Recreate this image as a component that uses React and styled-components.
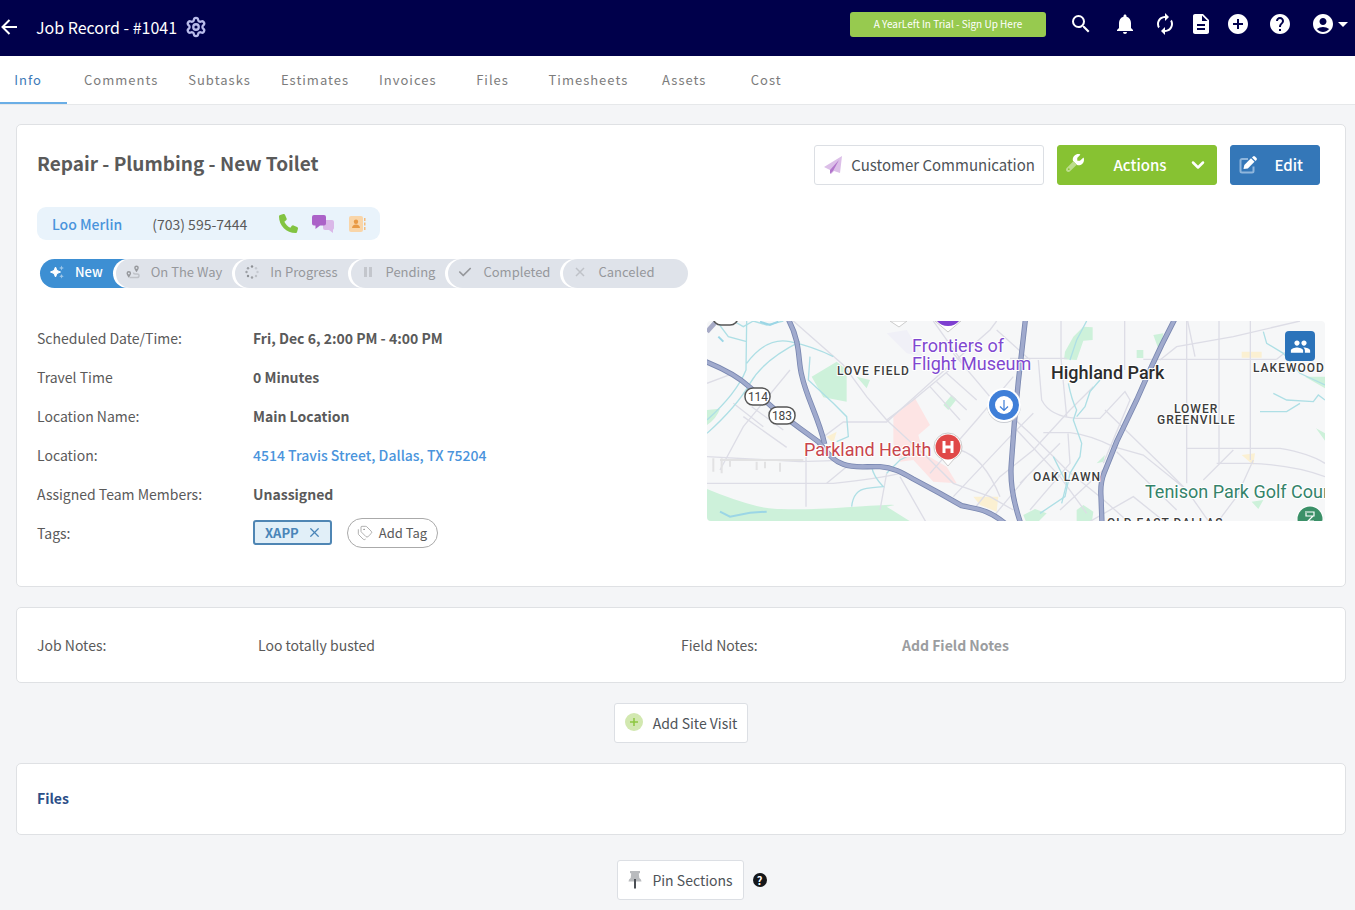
import React, { useState } from 'react'
import styled, { createGlobalStyle } from 'styled-components'
import {
	MdAccountCircle,
	MdAddCircle,
	MdArrowDropDown,
	MdAutorenew,
	MdDescription,
	MdGroup,
	MdHelp,
	MdNotifications,
	MdSearch,
} from 'react-icons/md'
import { FaCheck, FaPhone, FaWrench } from 'react-icons/fa6'
import { ChevronDown, Settings, Tags, X } from 'lucide-react'

const GlobalStyle = createGlobalStyle`
	*,
	*::before,
	*::after {
		box-sizing: border-box;
	}

	body {
		margin: 0;
		background-color: #f4f5f7;
		color: #5a5a5a;
		font-family: 'Noto Sans CJK SC', 'Open Sans', sans-serif;
		font-size: 14px;
		line-height: 20px;
	}

	button {
		font-family: inherit;
		cursor: pointer;
	}

	svg {
		display: block;
		flex-shrink: 0;
	}
`

const Header = styled.header`
	display: flex;
	justify-content: space-between;
	height: 56px;
	background-color: #00004b;
	color: #fff;
`

const HeaderTitle = styled.div`
	display: flex;
	align-items: center;
	padding: 0 0 2px 1px;
`

const Title = styled.h1`
	margin: 0 8px 0 19px;
	font-size: 16px;
	font-weight: 400;
	line-height: 24px;
`

const PlainButton = styled.button`
	display: flex;
	align-items: center;
	justify-content: center;
	padding: 0;
	border: 0;
	background: none;
	color: ${({ $color }) => $color || 'inherit'};
`

const HeaderTools = styled.div`
	display: flex;
	align-items: center;
	height: 48px;
`

const TrialButton = styled.button`
	width: 196px;
	height: 25px;
	margin-right: 13px;
	padding: 0;
	border: 0;
	border-radius: 3px;
	background-color: #97ca4f;
	color: #fff;
	font-size: 10px;
	line-height: 24px;
`

const ToolButton = styled(PlainButton)`
	width: ${({ $width }) => $width || 36}px;
	height: 48px;
`

const AccountButton = styled(PlainButton)`
	padding-left: 8px;

	svg + svg {
		margin-left: -4px;
	}
`

const TabBar = styled.nav`
	display: flex;
	height: 49px;
	background-color: #fff;
	border-bottom: 1px solid #e6e8ea;
`

const Tab = styled.a`
	display: flex;
	align-items: center;
	justify-content: center;
	min-width: 82px;
	height: 48px;
	padding: 0 15px;
	color: #7c7c7c;
	font-size: 13px;
	letter-spacing: 1px;
	text-decoration: none;

	&:first-child {
		min-width: 67px;
		margin-right: 2px;
		padding: 0 25px 0 14px;
	}

	&[aria-current] {
		color: #3d7ab8;
		border-bottom: 2px solid #6aaee6;
		padding-top: 2px;
	}
`

const Main = styled.main`
	display: flex;
	flex-direction: column;
	align-items: center;
	gap: 20px;
	padding: 19px 9px 10px 16px;
`

const Card = styled.section`
	width: 100%;
	padding: ${({ $pad }) => $pad || '20px'};
	border: 1px solid #dfe1e4;
	border-radius: 5px;
	background-color: #fff;
`

const CardHeader = styled.div`
	display: flex;
	align-items: flex-start;
	justify-content: space-between;
	padding-right: 5px;
`

const JobTitle = styled.h2`
	margin: 3px 0 0;
	font-size: 19px;
	font-weight: 700;
	line-height: 30px;
`

const ButtonGroup = styled.div`
	display: flex;
	gap: 13px;
`

const BoxButton = styled.button`
	display: flex;
	align-items: center;
	gap: 8px;
	height: 40px;
	padding: 0 ${({ $small }) => ($small ? 10 : 8)}px;
	border: 1px solid #dcdfe4;
	border-radius: 3px;
	background-color: #fff;
	color: #4e5358;
	font-size: ${({ $small }) => ($small ? 14 : 15)}px;
	line-height: 24px;
`

const FilledButton = styled(BoxButton)`
	justify-content: space-between;
	width: ${({ $wide }) => ($wide ? 160 : 90)}px;
	padding: 0 ${({ $wide }) => ($wide ? 8 : 16)}px 0 8px;
	border-color: ${({ $bg }) => $bg};
	background-color: ${({ $bg }) => $bg};
	color: #fff;
	font-weight: 500;
`

const TwoTone = styled.span`
	margin: 0 8px 4px 0;
	mask-image: linear-gradient(45deg, rgba(0, 0, 0, 0.45) 50%, #000 50%);
`

const Contact = styled.div`
	display: flex;
	align-items: center;
	width: fit-content;
	height: 33px;
	margin-top: 22px;
	padding: 0 14px 0 15px;
	border-radius: 9px;
	background-color: #e9f3fb;
`

const Link = styled.a`
	color: #4a94dc;
	font-weight: 500;
	text-decoration: none;
`

const Phone = styled.span`
	margin: 0 32px 0 30px;
`

const ContactIcons = styled.div`
	display: flex;
	align-items: center;
	gap: 14px;
`

const Statuses = styled.ol`
	display: flex;
	margin: 19px 0 0 3px;
	padding: 0;
	list-style: none;
`

const Status = styled.li`
	display: flex;
	margin-left: -15px;
	background-color: ${({ $active }) => ($active ? '#3d8fd3' : '#dfe3ea')};
	border-radius: 15px 0 0 15px;
	box-shadow: -3px 0 0 #fff;

	&:first-child {
		margin-left: 0;
		box-shadow: none;
	}

	&:last-child {
		border-radius: 15px;
	}
`

const StatusButton = styled(PlainButton)`
	gap: 11px;
	height: 29px;
	padding: 0 28px 3px 10px;
	color: ${({ $active }) => ($active ? '#fff' : '#96989c')};
	font-size: 13px;
	font-weight: ${({ $active }) => ($active ? 500 : 400)};
	line-height: 20px;

	${Status}:last-child & {
		padding-right: 34px;
	}
`

const Details = styled.div`
	display: grid;
	grid-template-columns: 1fr 1fr;
	margin-top: 30px;
	padding-bottom: 14px;
`

const Rows = styled.dl`
	display: grid;
	grid-template-columns: 216px 1fr;
	grid-auto-rows: 39px;
	align-items: center;
	margin: 0;

	dt,
	dd {
		margin: 0;
	}

	dd {
		display: flex;
		align-items: center;
		gap: 15px;
		font-weight: 700;
	}
`

const Tag = styled.span`
	display: flex;
	align-items: center;
	gap: 8px;
	height: 25px;
	padding: 0 8px 0 10px;
	border: 2px solid #4f86b4;
	border-radius: 3px;
	background-color: #e1eff8;
	color: #4a85b8;
	font-size: 13px;
`

const AddTag = styled.button`
	display: flex;
	align-items: center;
	gap: 6px;
	height: 30px;
	padding: 0 10px 0 9px;
	border: 1px solid #aaa;
	border-radius: 15px;
	background-color: #fff;
	color: #5a5a5a;
	font-size: 13px;
	line-height: 20px;

	svg {
		color: #8a8a8a;
	}
`

const MapBox = styled.div`
	position: relative;
	height: 200px;
	margin: 3px 0 0 26px;
	overflow: hidden;
	border-radius: 4px;
	background-color: #f6f7f8;

	text {
		font-family: Roboto, sans-serif;
		paint-order: stroke;
		stroke: #fff;
		stroke-width: 2px;
		stroke-linejoin: round;
	}
`

const PlaceName = styled.text`
	fill: ${({ $color }) => $color};
	font-size: 18px;
	font-weight: ${({ $bold }) => ($bold ? 500 : 400)};
`

const District = styled.text`
	fill: #3c3c3c;
	font-size: 12px;
	font-weight: 500;
	letter-spacing: 1px;
`

const RouteNumber = styled.text`
	fill: #444;
	font-size: 12px;
	text-anchor: middle;
`

const TeamButton = styled.button`
	position: absolute;
	top: 10px;
	right: 10px;
	display: grid;
	place-items: center;
	width: 30px;
	height: 30px;
	padding: 0;
	border: 0;
	border-radius: 4px;
	background-color: #2b73ba;
	color: #fff;
`

const Notes = styled.div`
	display: grid;
	grid-template-columns: 221px 1fr 221px 1fr;
	line-height: 24px;
`

const FieldNotes = styled(PlainButton)`
	justify-content: flex-start;
	color: #9b9da0;
	font-size: 14px;
	font-weight: 700;
	line-height: 24px;
`

const SectionTitle = styled.h3`
	margin: 0;
	color: #2c4f88;
	font-size: 14px;
	font-weight: 700;
	line-height: 24px;
`

const PinRow = styled.div`
	display: flex;
	align-items: center;
	gap: 9px;
	padding: 5px 0 0 22px;
`

const HelpDot = styled.button`
	width: 14px;
	height: 14px;
	padding: 0;
	border: 0;
	border-radius: 50%;
	background-color: #15171a;
	color: #fff;
	font-size: 11px;
	font-weight: 700;
	line-height: 14px;
`

const BackArrow = () => (
	<svg width='16' height='16' viewBox='0 0 16 16' fill='none' stroke='currentColor' strokeWidth='2'>
		<path d='M16 8H2M8.5 1 1.5 8l7 7' />
	</svg>
)

const PlaneIcon = () => (
	<svg width='20' height='18' viewBox='0 0 20 18'>
		<path d='M1 11 19 0l-2 17-6-2-3 3-1-4z' fill='#dcbfe8' />
		<path d='M7 14 16 4l-6 11-3 3z' fill='#b276cc' />
	</svg>
)

const EditIcon = () => (
	<svg width='18' height='18' viewBox='0 0 18 18'>
		<path d='M9 3H3a1.500 1.500 0 0 0-1.500 1.500V15A1.500 1.500 0 0 0 3 16.500h10a1.500 1.500 0 0 0 1.500-1.500v-4.500' fill='none' stroke='#8fb6dc' strokeWidth='2' />
		<path d='m4.500 13 .8-4L12 2.300 15.500 5.800 8.800 12.500z' fill='#fff' />
		<path d='m13 1.500 1-1q1-.8 2 0l1.500 1.500q.8 1 0 2l-1 1z' fill='#fff' />
	</svg>
)

const CommentsIcon = () => (
	<svg width='22' height='18' viewBox='0 0 22 18'>
		<path d='M13 5h7a2 2 0 0 1 2 2v6a2 2 0 0 1-1 1.700V18l-4-3h-4a2 2 0 0 1-2-2V5z' fill='#dab8e8' />
		<path d='M2 0h10a2 2 0 0 1 2 2v6.500a2 2 0 0 1-2 2H8L3.500 14v-3.500H2a2 2 0 0 1-2-2V2a2 2 0 0 1 2-2z' fill='#ab62c8' />
	</svg>
)

const AddressBookIcon = () => (
	<svg width='18' height='18' viewBox='0 0 18 18'>
		<rect x='1' y='1' width='14' height='16' rx='2' fill='#f9d5a8' />
		<path d='M16 3h1.500v3H16zM16 7.500h1.500v3H16zM16 12h1.500v3H16z' fill='#f4bc7c' />
		<circle cx='8' cy='6.800' r='2.200' fill='#e89a45' />
		<path d='M4 13q.3-3.500 4-3.500t4 3.500z' fill='#e89a45' />
	</svg>
)

const SparkleIcon = () => (
	<svg width='14' height='14' viewBox='0 0 14 14' fill='#fff'>
		<path d='M5.500 2 7 5.500 10.500 7 7 8.500 5.500 12 4 8.500.5 7 4 5.500z' stroke='#fff' strokeLinejoin='round' />
		<path d='m11.500.5.7 1.800 1.800.7-1.800.7-.7 1.800-.7-1.800L9 3l1.800-.7zM11.500 9l.7 1.500 1.600.7-1.600.7-.7 1.600-.7-1.600-1.500-.7 1.500-.7z' opacity='.5' />
	</svg>
)

const RouteIcon = () => (
	<svg width='14' height='14' viewBox='0 0 14 14' fill='#96989c'>
		<path d='M3.500 12.500h7.500q2 0 2-1.800T11 9H9q-1.500 0-1.500-1.500' fill='none' stroke='#bfc2c8' strokeWidth='1.500' />
		<path fillRule='evenodd' d='M2.800 6a2.300 2.300 0 0 1 2.300 2.300c0 1.500-2.300 4.500-2.300 4.500S.5 9.800.5 8.300A2.300 2.300 0 0 1 2.800 6zm0 1.500a.9.900 0 1 0 0 1.800.9.900 0 0 0 0-1.800zM10.500.5a2.300 2.300 0 0 1 2.300 2.300c0 1.500-2.300 4.500-2.300 4.500S8.200 4.300 8.200 2.800A2.300 2.300 0 0 1 10.500.5zm0 1.500a.9.900 0 1 0 0 1.800.9.900 0 0 0 0-1.800z' />
	</svg>
)

const ProgressIcon = () => (
	<svg width='14' height='14' viewBox='0 0 14 14' fill='#8c8f94'>
		<circle cx='7' cy='1.500' r='1.200' />
		<circle cx='3' cy='3.200' r='1.200' opacity='.8' />
		<circle cx='1.500' cy='7' r='1.200' opacity='.8' />
		<circle cx='3' cy='11' r='1.200' />
		<circle cx='7' cy='12.500' r='1.200' opacity='.8' />
		<circle cx='11' cy='11' r='1.200' opacity='.4' />
		<circle cx='12.500' cy='7' r='1.200' opacity='.3' />
		<circle cx='11' cy='3.200' r='1.200' opacity='.3' />
	</svg>
)

const PauseIcon = () => (
	<svg width='14' height='14' viewBox='0 0 14 14' fill='#c3c6cc'>
		<path d='M3 2h3v10H3z' />
		<path d='M8 2h3v10H8z' />
	</svg>
)

const CrossIcon = () => (
	<svg width='14' height='14' viewBox='0 0 14 14' stroke='#bfc2c8' strokeWidth='1.500'>
		<path d='m3 3 8 8M11 3l-8 8' />
	</svg>
)

const PlusDotIcon = () => (
	<svg width='20' height='20' viewBox='0 0 20 20'>
		<circle cx='9' cy='9' r='9' fill='#d2e8b0' />
		<path d='M9 5v8M5 9h8' stroke='#8cc63f' strokeWidth='1.500' />
	</svg>
)

const PinIcon = () => (
	<svg width='16' height='20' viewBox='0 0 16 20'>
		<path d='M2 1h10v2l-1.200.5.5 4.500q2.200 1 2.200 3.500h-13Q.5 9 2.700 8l.5-4.500L2 3z' fill='#b9bbbe' />
		<path d='M6 9h2v9l-1 1-1-1z' fill='#4b4f55' />
	</svg>
)

const statuses = [
	{ name: 'New', icon: <SparkleIcon /> },
	{ name: 'On The Way', icon: <RouteIcon /> },
	{ name: 'In Progress', icon: <ProgressIcon /> },
	{ name: 'Pending', icon: <PauseIcon /> },
	{ name: 'Completed', icon: <FaCheck size={14} /> },
	{ name: 'Canceled', icon: <CrossIcon /> },
]

const tabs = [
	'Info',
	'Comments',
	'Subtasks',
	'Estimates',
	'Invoices',
	'Files',
	'Timesheets',
	'Assets',
	'Cost',
]

const freeways = [
	'M15 154C60 172 110 195 150 232L230 303 300 355 355 395C385 430 395 450 430 463S500 468 540 470 610 490 640 507L720 550 785 587C830 598 860 595 915 640',
	'M266 30C303 100 293 150 305 195 320 265 355 320 374 402',
	'M976 30 955 215 943 340 934 460C928 530 945 590 962 640',
	'M1425 26 1385 105 1352 175 1310 270 1250 395 1212 490Q1200 520 1203 560L1206 640',
]

const roads = [
	'M21 520H400Q540 505 600 490M318 395V590M21 440 300 455 400 452M21 220 100 190',
	'M60 480 130 350 270 180M130 320 260 412M155 290 250 360M100 280 190 350',
	'M280 33 430 165 500 260 560 330 690 450 760 520 870 560 940 600',
	'M345 400 430 336H560L700 210 870 60 890 33M380 520 440 470',
	'M560 330 640 270 760 170M690 230 780 330M710 215 800 300M740 190 830 270',
	'M760 130 870 260 990 370 1100 480 1200 560 1290 640M700 33 790 160M890 60 990 150',
	'M690 490 830 330 940 200M760 560 930 380 1000 310M820 600 900 500 1000 420 1110 300 1180 230',
	'M780 420Q850 440 900 560M560 490 540 600M600 500 680 640M880 620 980 500',
	'M930 145H1100M1330 148H1730M1083 33V145L1100 320M1274 33V180M1460 33V520M1557 33V460M1651 33V450',
	'M1015 150 1025 270Q1050 320 1130 325L1200 325 1275 245 1290 270 1210 460',
	'M1030 368H1110Q1170 375 1240 410L1330 435 1460 540 1530 640M1215 300 1400 480 1480 560M1250 425 1430 600',
	'M1460 415H1740Q1830 430 1875 460M1550 460H1650Q1780 465 1875 500M1660 450 1610 560 1550 640',
	'M1380 150 1430 110 1600 80 1800 33M1463 33 1485 140M1730 148 1790 100M1510 510 1600 420',
	'M950 360 1080 500 1160 610M960 520 1080 400M990 600 1110 460 1104 370M1080 600 1220 470M1160 640 1300 560 1400 640',
]

const streams = [
	'M140 33 138 180Q110 250 21 330M50 33 85 80 140 95M140 160Q200 80 270 95T400 140M21 370Q110 290 150 220T300 95',
	'M100 33 130 50 160 33 200 45 250 33M330 140 325 210 400 280 440 320 445 380 410 395',
	'M455 590Q460 540 500 535T550 530Q520 500 515 470M560 490 600 450 640 430',
	'M1160 33 1130 90 1110 150M1105 220Q1115 270 1130 300L1120 330 1145 400 1140 440 1110 490 1095 560 1020 610',
	'M1200 210 1170 245 1155 290 1130 320M1060 440 1100 520 1085 580',
	'M1690 65 1700 100 1750 130 1800 190 1875 225M1720 250 1760 270 1840 275 1855 255 1875 270M1680 305 1760 305 1800 280',
]

const JobMap = () => (
	<MapBox>
		<svg width='100%' height='200' viewBox='0 0 618 200' preserveAspectRatio='xMidYMid slice' role='img' aria-label='Job location map'>
			<g transform='scale(.33333) translate(-21 -33)' fill='none'>
				<path d='M21 537Q100 570 170 588T440 592 560 590L640 640H21zM335 200 410 155 440 180V275L370 262zM21 300 60 296Q50 325 21 345zM730 285 755 255 770 268 745 300zM470 200 510 210 500 235z' fill='#cdf1da' />
				<path d='M1120 80 1150 50 1178 52V90L1150 92 1130 150 1092 148 1095 125zM1360 75 1390 70 1380 130zM1310 120h20v24h-20zM970 615 1005 597 1040 610 1010 640 980 640zM1130 600 1150 585 1180 605 1175 640H1130zM1190 460 1215 435 1210 455zM1815 200 1875 200V235zM1848 355 1875 370V392zM1655 575 1690 570 1675 597z' fill='#cdf1da' />
				<path d='M580 320 645 265 690 345 655 375 670 430 740 470 770 520 700 515 640 450 600 455 580 400z' fill='#fde4e4' />
				<path d='M820 560H895L890 605 840 585zM1625 435 1665 430 1660 465zM380 380 410 365 400 400zM1625 125h60v18h-60z' fill='#fbf0d2' />
				<path d='M560 70 620 60 670 140 620 130z' fill='#f0f0f7' />
				<g stroke='#dddde6' strokeWidth='4'>
					{roads.map(d => (
						<path key={d} d={d} />
					))}
				</g>
				<path d='M40 445V485M65 445V490M90 450V470M170 455V480M195 455V475M240 458V485M60 450H310' stroke='#e2e2e3' strokeWidth='6' />
				<g stroke='#aedfe5' strokeWidth='4'>
					{streams.map(d => (
						<path key={d} d={d} />
					))}
				</g>
				<path d='M60 605 90 620 150 608 200 605M55 80 70 95M180 35 210 45 235 35' stroke='#9bd6e6' strokeWidth='6' />
				<path d='M21 65 50 33' stroke='#a6aac6' strokeWidth='14' />
				<g stroke='#7987b0' strokeWidth='16'>
					{freeways.map(d => (
						<path key={d} d={d} />
					))}
				</g>
				<g stroke='#a0aacd' strokeWidth='11'>
					{freeways.map(d => (
						<path key={d} d={d} />
					))}
				</g>
			</g>
			<g fill='#fff' stroke='#555' strokeWidth='1.500'>
				<rect x='38' y='67' width='25' height='17' rx='8' />
				<rect x='62' y='86' width='26' height='17' rx='8' />
				<rect x='6' y='-13' width='25' height='17' rx='8' />
			</g>
			<RouteNumber x='51' y='80'>114</RouteNumber>
			<RouteNumber x='75' y='99'>183</RouteNumber>
			<path d='M183 0h17l-8 6zM228 0h26l-13 11z' fill='#fff' stroke='#ccc' />
			<path d='M230 0h22q-4 5-11 5t-11-5z' fill='#7e3fd0' />
			<District x='130' y='54'>LOVE FIELD</District>
			<District x='546' y='51'>LAKEWOOD</District>
			<District x='467' y='92'>LOWER</District>
			<District x='450' y='103'>GREENVILLE</District>
			<District x='326' y='160'>OAK LAWN</District>
			<District x='400' y='206'>OLD EAST DALLAS</District>
			<PlaceName x='205' y='31' $color='#8048d0'>Frontiers of</PlaceName>
			<PlaceName x='205' y='49' $color='#8048d0'>Flight Museum</PlaceName>
			<PlaceName x='344' y='58' $color='#2c2c2c' $bold>Highland Park</PlaceName>
			<PlaceName x='97' y='135' $color='#c8444c'>Parkland Health</PlaceName>
			<PlaceName x='438' y='177' $color='#34836a'>Tenison Park Golf Course</PlaceName>
			<path d='M227 126a14 14 0 0 1 28 0q0 8-8 12l-6 7-6-7q-8-4-8-12z' fill='#fff' stroke='#ccc' />
			<circle cx='241' cy='126' r='12.500' fill='#e04848' />
			<path d='M237 120v12M245 120v12M237 126h8' stroke='#fff' strokeWidth='3' fill='none' />
			<circle cx='297' cy='85' r='17' fill='#c9ccd2' />
			<circle cx='297' cy='84' r='17' fill='#fff' />
			<circle cx='297' cy='84' r='15' fill='#3f7fd8' />
			<circle cx='297' cy='84' r='9' fill='#fff' />
			<path d='M297 79v10M293 85.500l4 4 4-4' stroke='#3f7fd8' strokeWidth='1.200' fill='none' />
			<circle cx='603' cy='198' r='13.500' fill='#fff' />
			<circle cx='603' cy='198' r='12.500' fill='#3b9068' />
			<path d='M598 191h9v4h-8v-3M606 195l-5 5h6' stroke='#fff' strokeWidth='1.200' fill='none' />
		</svg>
		<TeamButton aria-label='Show team'>
			<MdGroup size={21} />
		</TeamButton>
	</MapBox>
)

const App = () => {
	const [status, setStatus] = useState('New')

	return (
		<>
			<GlobalStyle />
			<Header>
				<HeaderTitle>
					<PlainButton aria-label='Back'>
						<BackArrow />
					</PlainButton>
					<Title>Job Record - #1041</Title>
					<PlainButton aria-label='Settings' $color='#b9bbea'>
						<Settings size={22} strokeWidth={2.5} />
					</PlainButton>
				</HeaderTitle>
				<HeaderTools>
					<TrialButton>A YearLeft In Trial - Sign Up Here</TrialButton>
					<ToolButton $width={44} aria-label='Search'>
						<MdSearch size={24} />
					</ToolButton>
					<ToolButton $width={44} aria-label='Notifications'>
						<MdNotifications size={24} />
					</ToolButton>
					<ToolButton aria-label='Refresh'>
						<MdAutorenew size={24} />
					</ToolButton>
					<ToolButton aria-label='Documents'>
						<MdDescription size={24} />
					</ToolButton>
					<ToolButton $width={38} aria-label='Add'>
						<MdAddCircle size={24} />
					</ToolButton>
					<ToolButton $width={46} aria-label='Help'>
						<MdHelp size={24} />
					</ToolButton>
					<AccountButton aria-label='Account'>
						<MdAccountCircle size={24} />
						<MdArrowDropDown size={24} />
					</AccountButton>
				</HeaderTools>
			</Header>
			<TabBar>
				{tabs.map((tab, i) => (
					<Tab key={tab} href={`#${tab.toLowerCase()}`} aria-current={i === 0 ? 'page' : undefined}>
						{tab}
					</Tab>
				))}
			</TabBar>
			<Main>
				<Card>
					<CardHeader>
						<JobTitle>Repair - Plumbing - New Toilet</JobTitle>
						<ButtonGroup>
							<BoxButton>
								<PlaneIcon />
								Customer Communication
							</BoxButton>
							<FilledButton $wide $bg='#87c232'>
								<TwoTone>
									<FaWrench size={18} />
								</TwoTone>
								Actions
								<ChevronDown size={20} strokeWidth={3} />
							</FilledButton>
							<FilledButton $bg='#3477b8'>
								<EditIcon />
								Edit
							</FilledButton>
						</ButtonGroup>
					</CardHeader>
					<Contact>
						<Link href='#customer'>Loo Merlin</Link>
						<Phone>(703) 595-7444</Phone>
						<ContactIcons>
							<PlainButton aria-label='Call' $color='#82c341'>
								<FaPhone size={19} />
							</PlainButton>
							<PlainButton aria-label='Message'>
								<CommentsIcon />
							</PlainButton>
							<PlainButton aria-label='Contact card'>
								<AddressBookIcon />
							</PlainButton>
						</ContactIcons>
					</Contact>
					<Statuses>
						{statuses.map(({ name, icon }) => (
							<Status key={name} $active={name === status}>
								<StatusButton $active={name === status} onClick={() => setStatus(name)}>
									{icon}
									{name}
								</StatusButton>
							</Status>
						))}
					</Statuses>
					<Details>
						<Rows>
							<dt>Scheduled Date/Time:</dt>
							<dd>Fri, Dec 6, 2:00 PM - 4:00 PM</dd>
							<dt>Travel Time</dt>
							<dd>0 Minutes</dd>
							<dt>Location Name:</dt>
							<dd>Main Location</dd>
							<dt>Location:</dt>
							<dd>
								<Link href='#location'>4514 Travis Street, Dallas, TX 75204</Link>
							</dd>
							<dt>Assigned Team Members:</dt>
							<dd>Unassigned</dd>
							<dt>Tags:</dt>
							<dd>
								<Tag>
									XAPP
									<PlainButton aria-label='Remove tag XAPP'>
										<X size={15} />
									</PlainButton>
								</Tag>
								<AddTag>
									<Tags size={16} strokeWidth={1} />
									Add Tag
								</AddTag>
							</dd>
						</Rows>
						<JobMap />
					</Details>
				</Card>
				<Card $pad='25px 20px'>
					<Notes>
						<span>Job Notes:</span>
						<span>Loo totally busted</span>
						<span>Field Notes:</span>
						<FieldNotes>Add Field Notes</FieldNotes>
					</Notes>
				</Card>
				<BoxButton $small>
					<PlusDotIcon />
					Add Site Visit
				</BoxButton>
				<Card $pad='22px 20px 24px'>
					<SectionTitle>Files</SectionTitle>
				</Card>
				<PinRow>
					<BoxButton $small>
						<PinIcon />
						Pin Sections
					</BoxButton>
					<HelpDot aria-label='About pinned sections'>?</HelpDot>
				</PinRow>
			</Main>
		</>
	)
}

export default App
